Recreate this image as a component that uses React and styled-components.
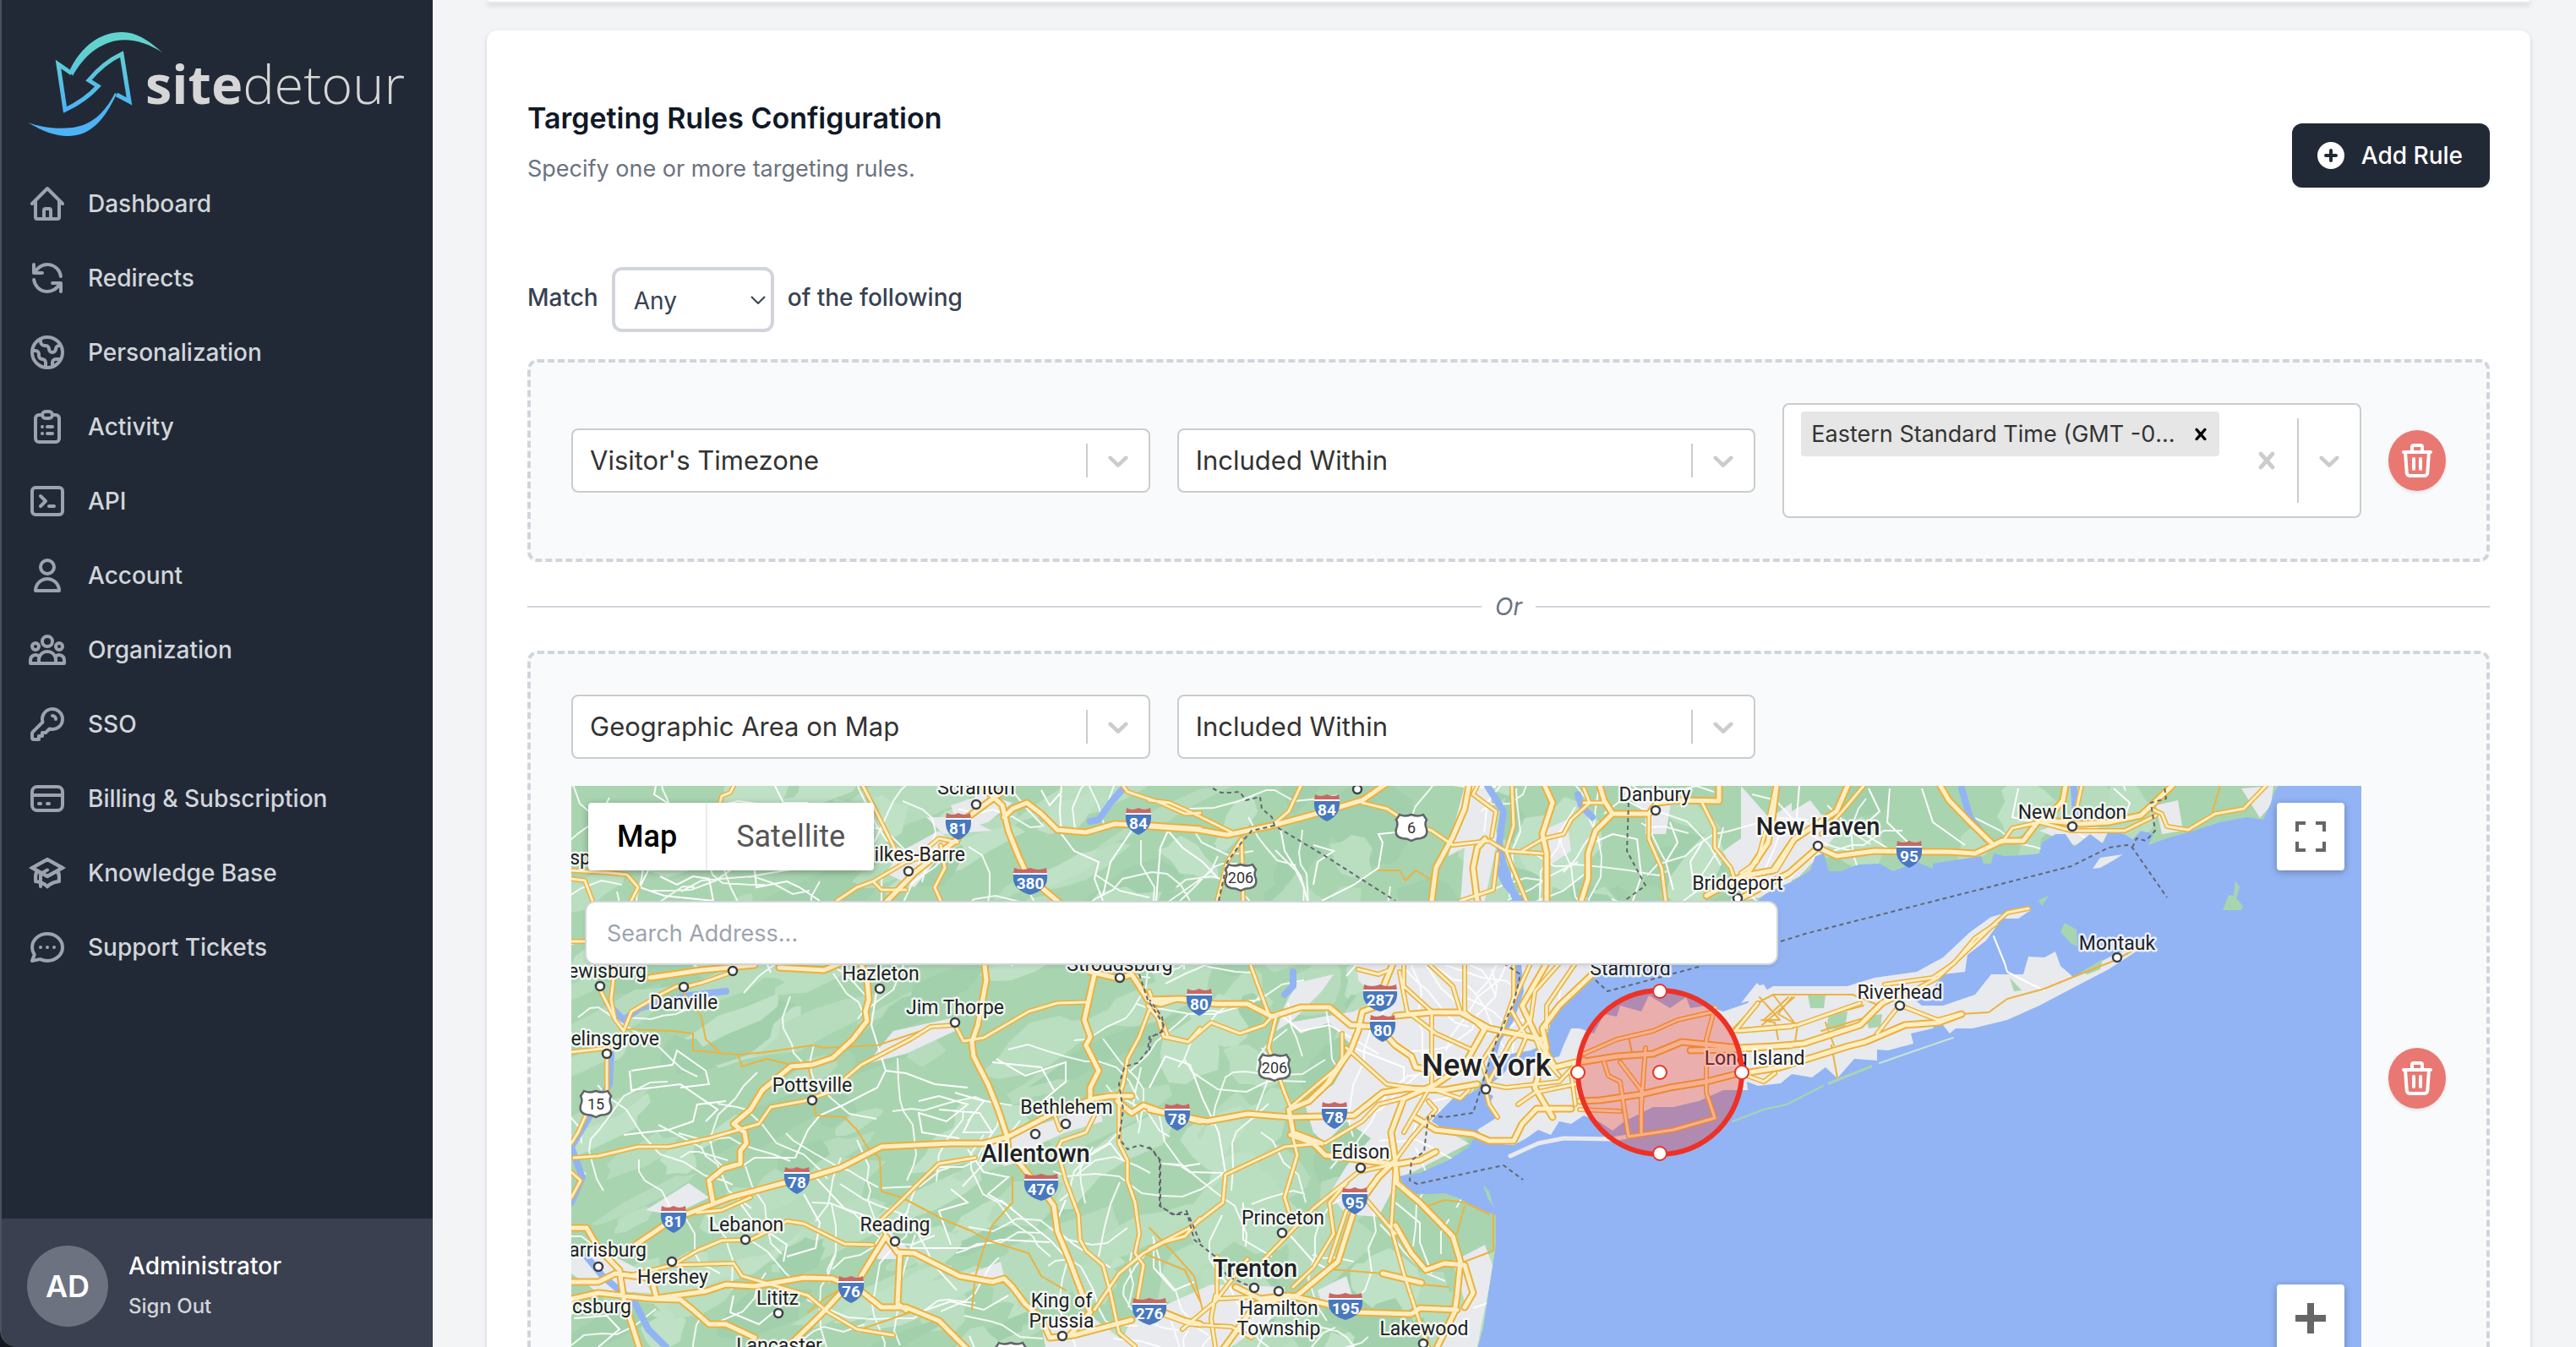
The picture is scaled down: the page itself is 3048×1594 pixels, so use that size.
import React from "react";
import styled, { createGlobalStyle } from "styled-components";
import {
  HiOutlineHome,
  HiOutlineRefresh,
  HiOutlineGlobe,
  HiOutlineClipboardList,
  HiOutlineTerminal,
  HiOutlineUser,
  HiOutlineUserGroup,
  HiOutlineKey,
  HiOutlineCreditCard,
  HiOutlineAcademicCap,
  HiOutlineChat,
  HiOutlineTrash,
  HiPlusCircle,
} from "react-icons/hi";

const GlobalStyle = createGlobalStyle`
  *, *::before, *::after { box-sizing: border-box; }
  body {
    margin: 0;
    font-family: Inter, "Liberation Sans", sans-serif;
    font-size: 28px;
    line-height: 40px;
    color: #374151;
    -webkit-font-smoothing: antialiased;
  }
  button, input, select { font: inherit; color: inherit; }
  h2, p { margin: 0; }
`;

/* ---------- shell ---------- */

const Shell = styled.div`
  display: flex;
  height: 100vh;
  overflow: hidden;
  background: #15181f;
`;

const Sidebar = styled.aside`
  display: flex;
  flex-direction: column;
  flex: 0 0 512px;
  overflow: hidden;
  background: #222936;
  border-left: 2px solid #4b515d;
  border-bottom-left-radius: 20px;
`;

const LogoLink = styled.a`
  display: block;
  height: 164px;
  padding: 32px 0 0 30px;
`;

const Nav = styled.nav`
  display: flex;
  flex: 1;
  flex-direction: column;
  gap: 8px;
  padding: 37px 14px 0;
`;

const NavLink = styled.a`
  display: flex;
  align-items: center;
  gap: 24px;
  height: 80px;
  padding: 0 16px;
  border-radius: 12px;
  color: #d1d5db;
  font-weight: 500;
  text-decoration: none;

  svg {
    width: 48px;
    height: 48px;
    color: #9ca3af;
  }
`;

const UserPanel = styled.a`
  display: flex;
  align-items: center;
  gap: 24px;
  height: 152px;
  padding: 8px 30px 0;
  background: #3a404f;
  color: #fff;
  font-weight: 500;
  text-decoration: none;
`;

const Avatar = styled.span`
  display: grid;
  place-items: center;
  width: 96px;
  height: 96px;
  border-radius: 50%;
  background: #6c7280;
  font-size: 36px;
  font-weight: 600;
`;

const UserText = styled.span`
  display: flex;
  flex-direction: column;
  gap: 8px;
`;

const SignOut = styled.span`
  font-size: 24px;
  color: #d1d5db;
`;

const Main = styled.main`
  flex: 1;
  min-width: 0;
  overflow-y: auto;
  scrollbar-width: none;
  padding: 0 54px 64px 64px;
  background: #f3f4f6;
`;

const Card = styled.section`
  padding: 80px 48px 48px;
  border-radius: 12px;
  background: #fff;
  box-shadow: 0 2px 6px rgba(0, 0, 0, 0.1), 0 2px 4px rgba(0, 0, 0, 0.06);
`;

const PreviousCard = styled.section`
  height: 4px;
  margin-bottom: 32px;
  border-radius: 0 0 12px 12px;
  background: #fff;
  box-shadow: 0 2px 6px rgba(0, 0, 0, 0.16), inset 0 -2px 0 #e5e7eb;
`;

/* ---------- header ---------- */

const Header = styled.header`
  display: flex;
  align-items: flex-end;
  justify-content: space-between;
  margin-bottom: 94px;
`;

const HeaderText = styled.div`
  padding-bottom: 2px;
`;

const Title = styled.h2`
  font-size: 34px;
  line-height: 48px;
  font-weight: 600;
  color: #111827;
`;

const Subtitle = styled.p`
  margin-top: 16px;
  font-size: 27px;
  color: #6b7280;
`;

const PrimaryButton = styled.button`
  display: flex;
  align-items: center;
  gap: 16px;
  height: 76px;
  padding: 0 32px 0 26px;
  border: 0;
  border-radius: 12px;
  background: #222936;
  color: #fff;
  font-weight: 500;
  box-shadow: 0 2px 4px rgba(0, 0, 0, 0.06);

  svg {
    width: 40px;
    height: 40px;
  }
`;

const MatchRow = styled.div`
  display: flex;
  align-items: center;
  gap: 16px;
  margin-bottom: 32px;
  font-weight: 500;
`;

const MatchText = styled.span`
  padding-bottom: 6px;
`;

const MatchSelectWrap = styled.span`
  display: grid;
  align-items: center;
  width: 192px;

  & > * { grid-area: 1 / 1; }
  svg {
    justify-self: end;
    margin-right: 10px;
    pointer-events: none;
  }
`;

const MatchSelect = styled.select`
  appearance: none;
  width: 100%;
  height: 77px;
  padding: 2px 22px 0;
  border: 4px solid #d1d5db;
  border-radius: 12px;
  background: #fff;
  font-weight: 400;
`;

/* ---------- rules ---------- */

const RuleBox = styled.div`
  display: flex;
  align-items: center;
  gap: 32px;
  padding: 48px;
  border: 4px dashed #d1d5db;
  border-radius: 12px;
  background: #f9fafb;
`;

const RuleBody = styled.div`
  display: flex;
  flex: 1;
  min-width: 0;
  flex-direction: column;
  gap: 32px;
`;

const FieldGrid = styled.div`
  display: grid;
  grid-template-columns: repeat(3, minmax(0, 1fr));
  gap: 32px;
  align-items: center;
`;

const FieldWrap = styled.span`
  display: grid;
  & > * { grid-area: 1 / 1; }
`;

const FieldSelect = styled.select`
  appearance: none;
  width: 100%;
  height: 76px;
  padding: 0 96px 0 20px;
  border: 2px solid #ccc;
  border-radius: 8px;
  background: #fff;
  color: #333;
  font-size: 31px;
`;

const Indicators = styled.span`
  display: flex;
  justify-self: end;
  align-items: center;
  padding: 2px;
  color: #ccc;
  pointer-events: none;
`;

const Divider = styled.span`
  align-self: stretch;
  width: 2px;
  margin: 16px 0;
  background: #ccc;
`;

const IndicatorIcon = styled.svg`
  display: block;
  width: 40px;
  height: 40px;
  margin: 16px;
  fill: currentColor;
`;

const MultiControl = styled.div`
  display: flex;
  height: 136px;
  border: 2px solid #ccc;
  border-radius: 8px;
  background: #fff;
`;

const MultiValues = styled.div`
  flex: 1;
  min-width: 0;
  padding: 4px 16px;
`;

const Chip = styled.span`
  display: flex;
  align-items: center;
  margin: 4px;
  height: 53px;
  border-radius: 4px;
  background: #e6e6e6;
  color: #333;
  font-size: 27px;
`;

const ChipLabel = styled.span`
  flex: 1;
  min-width: 0;
  overflow: hidden;
  padding-left: 12px;
  text-overflow: ellipsis;
  white-space: nowrap;
`;

const GhostButton = styled.button`
  display: grid;
  place-items: center;
  padding: 0;
  border: 0;
  background: none;
  color: inherit;
`;

const ChipRemove = styled(GhostButton)`
  width: 44px;
  height: 53px;
  margin-left: 8px;
  color: #000;

  svg { width: 28px; height: 28px; margin: 0; }
`;

const MultiInput = styled.input`
  display: block;
  width: 100%;
  height: 56px;
  padding: 0 4px;
  border: 0;
  outline: 0;
  background: none;
`;

const MultiIndicators = styled.div`
  display: flex;
  align-items: center;
  color: #ccc;
`;

const DeleteButton = styled.button`
  display: grid;
  place-items: center;
  flex: none;
  width: 68px;
  height: 72px;
  padding: 0;
  border: 0;
  border-radius: 50%;
  background: #e97873;
  color: #fff;
  box-shadow: 0 2px 4px rgba(0, 0, 0, 0.1);

  svg { width: 48px; height: 48px; }
`;

const OrRow = styled.div`
  display: flex;
  align-items: center;
  gap: 16px;
  height: 105px;
  color: #6b7280;
  font-style: italic;

  &::before, &::after {
    content: "";
    flex: 1;
    height: 2px;
    background: #d1d5db;
  }
`;

/* ---------- map ---------- */

const MapFrame = styled.div`
  position: relative;
  height: 800px;
  overflow: hidden;
  background: #92b4f4;
  font-family: Roboto, sans-serif;

  & > svg { display: block; width: 100%; height: 100%; }
`;

const MapTypes = styled.div`
  position: absolute;
  top: 20px;
  left: 20px;
  display: flex;
  border-radius: 4px;
  background: #fff;
  box-shadow: 0 2px 8px rgba(0, 0, 0, 0.3);
`;

const MapType = styled.button`
  height: 80px;
  padding: 0 34px;
  border: 0;
  border-left: ${(p) => (p.$active ? "0" : "2px solid #ececec")};
  background: none;
  color: ${(p) => (p.$active ? "#000" : "#565656")};
  font-size: 36px;
  font-weight: ${(p) => (p.$active ? 500 : 400)};
`;

const MapSearch = styled.input`
  position: absolute;
  top: 136px;
  left: 16px;
  width: 1412px;
  max-width: calc(100% - 34px);
  height: 76px;
  padding: 0 24px;
  border: 2px solid #d1d5db;
  border-radius: 12px;
  background: #fff;
  font-family: Inter, sans-serif;
  font-size: 27px;
  box-shadow: 0 2px 4px rgba(0, 0, 0, 0.08);

  &::placeholder { color: #9ca3af; opacity: 1; }
`;

const MapControl = styled.button`
  position: absolute;
  top: ${(p) => p.$top}px;
  right: 20px;
  display: grid;
  place-items: center;
  width: 80px;
  height: 80px;
  padding: 0;
  border: 0;
  border-radius: 4px;
  background: #fff;
  box-shadow: 0 2px 8px rgba(0, 0, 0, 0.3);
`;

/* Survey sheets: every sheet has an origin and a horizontal resolution. */
const sheet = (ox, oy, sx) => (pts) =>
  pts
    .trim()
    .split(/\s+/)
    .map((p) => {
      const [x, y] = p.split(",").map(Number);
      return `${Math.round(ox + x / sx)},${Math.round(oy + y / 3)}`;
    });
const S = {
  A: sheet(660, 720, 2.063),
  B: sheet(1360, 720, 2.063),
  C: sheet(2060, 720, 1.587),
  D: sheet(660, 1140, 2.063),
  E: sheet(1360, 1140, 2.063),
  F: sheet(2000, 1180, 1.496),
};
const join = (...parts) => parts.flat().join(" ");
const line = ([k, pts]) => "M" + S[k](pts).join(" L");
const lines = (list) => list.map(line).join(" ");

const MAINLAND = join(
  ["676,930"],
  S.C("1010,630 1000,660 995,690 980,750 950,740 900,760 850,790 800,815 765,840 775,800 750,790 735,820 720,800 690,790 680,835 655,800 625,845 610,800 590,800 565,830 560,870 530,875 495,880 475,870 470,905 455,905 450,880 400,895 360,905 360,925 330,900 285,932 260,905 220,910 185,932 165,932 155,870 140,880 130,930 100,965 60,1000 35,1025 0,1037"),
  S.B("1510,1005 1485,1037 1400,1110 1230,1200 1150,1230"),
  S.E("1085,30 1050,70 1020,110 985,180 975,230 960,290 930,310 880,320 850,330 830,400 800,450 770,470 740,480 700,540 690,560 720,590 800,600 780,650 730,700 660,745 610,755 620,790 650,820 690,820 720,815 750,830 800,870 845,895 845,1000 830,1150 815,1290 800,1370 800,1760"),
  ["676,1740"]
);

const LONG_ISLAND = join(
  S.E("890,345 960,345 1000,330 1010,290 1030,230 1050,230 1085,250 1110,180 1140,190 1150,150 1200,170 1220,115 1270,160 1310,120 1320,160 1360,150 1400,170 1460,140 1480,80 1500,75 1515,110 1568,90"),
  S.C("0,1400 30,1330 45,1360 60,1340 200,1340 250,1310 330,1290 380,1240 430,1150 470,1095 500,1080 540,1058 545,1070 520,1100 490,1100 460,1180 425,1230 420,1290 380,1300 360,1350 320,1380 340,1410 380,1410 440,1370 470,1300 530,1300 540,1235 570,1240 590,1218 600,1270 625,1310 660,1270 700,1230 760,1190 740,1220 690,1280 620,1350 560,1410 500,1460"),
  S.F("500,110 470,110 460,130 440,80 430,110 390,130 395,165 350,190 330,185 330,225 290,220 260,288 240,250 215,285 180,272 160,305 120,315 100,300"),
  S.E("1460,450 1400,450 1340,490 1280,510 1230,510 1160,560 1130,595 1100,565 1060,540 1030,570 1000,560 980,610 950,590 920,620 890,645 830,640 800,590 850,545 830,500 840,470 810,450 860,400")
);

const URBAN = [
  ["E", "505,0 1085,0 1050,80 985,200 960,330 850,330 780,470 700,540 720,590 780,640 640,745 610,755 560,900 480,890 440,820 480,720 540,620 480,560 430,640 400,600 380,500 450,430 500,300 440,210 370,250 340,210 500,170 560,130 510,60"],
  ["B", "770,630 830,630 850,820 820,1037 760,1037 770,850 730,880 740,790"],
  ["B", "960,790 1020,750 1030,860 980,910"],
  ["B", "1150,640 1280,640 1260,800 1210,800 1210,730"],
  ["B", "1400,860 1568,690 1568,985 1500,1000 1430,960"],
  ["C", "0,630 60,760 130,680 180,800 150,870 110,950 35,1025 0,1037"],
  ["C", "560,790 620,750 690,790 680,830 625,840"],
  ["C", "940,640 1000,630 995,700 975,745"],
  ["C", "780,700 820,680 830,790 790,800"],
  ["D", "1040,640 1200,560 1320,500 1330,560 1240,600 1180,640 1140,700 1090,720"],
  ["D", "770,1000 810,950 860,1020 830,1050 780,1050"],
  ["D", "820,240 960,195 970,240 850,320 760,355 780,310"],
  ["D", "215,875 320,780 370,830 280,895"],
  ["D", "33,1050 100,1010 190,1080 230,1170 90,1160 33,1100"],
  ["D", "990,1110 1080,1060 1090,1110 1010,1130"],
  ["D", "1180,1280 1290,1240 1400,1362 1190,1362"],
  ["D", "1400,1260 1568,1270 1568,1362 1370,1362"],
  ["A", "960,700 1040,660 1110,690 1050,760 980,790"],
  ["A", "840,860 930,790 960,830 870,990 800,940"],
  ["A", "900,740 990,740 1060,790 940,800"],
  ["E", "0,1240 150,1140 330,1150 330,1230 200,1362 0,1362"],
  ["E", "740,1060 820,1000 840,1080 810,1280 800,1362 700,1362 770,1200"],
  ["E", "410,1160 480,1110 500,1200 420,1210"],
  ["E", "360,70 330,150 310,240 350,200 420,100 450,40"],
];

const RIVERS = [
  ["D", "130,320 125,430 70,560 33,650 60,760 33,850"],
  ["D", "70,1040 110,1110 150,1160 190,1210 220,1300 265,1362"],
  ["D", "120,140 160,200 200,160 320,115 410,100"],
  ["B", "825,630 865,720 855,830 862,900 880,980 895,1037"],
  ["B", "850,920 870,980 905,1037"],
  ["B", "1045,660 1055,700 1080,740"],
  ["E", "900,0 905,100 880,200 850,270 825,400 800,500"],
  ["A", "1380,640 1350,690 1320,750 1300,755"],
  ["C", "415,640 430,740 460,820"],
  ["C", "625,640 628,740"],
  ["E", "350,30 350,80 330,110"],
];

const MOTORWAYS = [
  ["A", "1040,640 1085,700 1100,790 1125,880 1140,930 1180,990 1235,1060"],
  ["A", "1090,740 1110,710 1145,690 1180,730 1220,785 1290,795 1360,765 1450,772 1568,782"],
  ["A", "1085,650 1000,740 975,820 930,870 870,940 790,1060"],
  ["D", "225,50 350,25 480,5"],
  ["D", "540,15 650,25 700,-5"],
  ["D", "735,-20 755,60 760,130 750,170 755,205 720,270 670,335 620,360 570,365 500,450 470,520 430,570 455,600 460,640 445,665 445,710 405,730 370,770 380,855"],
  ["D", "1040,-20 1045,60 1025,220 1010,280 1015,330 1050,430 1075,520 1095,610 1100,660 1150,750 1190,820 1210,860 1220,950 1250,1060 1280,1170 1300,1240 1250,1320"],
  ["D", "190,1000 280,910 420,830 550,780 620,755 690,725 790,650 960,638 1040,640 1100,615 1210,530 1310,480 1350,470 1400,470"],
  ["D", "1365,490 1400,530 1430,505 1470,525 1568,560"],
  ["D", "33,1190 100,1170 230,1190 360,1165 410,1140 480,1145 600,1115 670,1120 740,1165 790,1220 850,1220 930,1270 1000,1370"],
  ["D", "230,1190 300,1195 330,1230 370,1280 410,1280 480,1330"],
  ["D", "33,940 70,940 100,1010 150,1090 160,1190 200,1370"],
  ["D", "33,1130 100,1130 140,1100 230,1120 240,1180"],
  ["D", "710,1140 640,1250 570,1350"],
  ["D", "1310,40 1285,200 1300,260 1290,290 1320,380 1300,440 1300,485"],
  ["D", "1300,30 1370,55 1400,40 1440,130 1470,145 1510,125 1568,135"],
  ["D", "800,970 830,1025 870,1030 980,1110 1060,1130 1090,1120 1110,1150 1140,1210 1180,1260 1200,1330"],
  ["D", "800,970 770,1040 740,1110"],
  ["D", "835,1030 830,1210 850,1230"],
  ["D", "1200,1330 1260,1320 1400,1265"],
  ["D", "1480,1240 1530,1270 1568,1280"],
  ["B", "0,775 120,785 190,805 300,770 370,745 450,710 520,680 580,620"],
  ["B", "780,630 770,710 740,810 700,920 690,1037"],
  ["B", "820,820 800,850 790,920 800,1037"],
  ["B", "965,630 985,690 960,800 970,870 970,1037"],
  ["B", "1100,630 1110,680 1130,730 1090,790 1070,870 1070,960 1055,1037"],
  ["B", "1130,730 1220,730 1240,690 1290,680 1390,685 1390,630"],
  ["B", "1530,630 1520,750 1510,830 1460,940 1360,1020"],
  ["C", "200,630 180,720 100,820 60,930 0,950"],
  ["C", "145,850 180,880 250,860 320,865 390,865 440,870 490,825 530,825 560,750 640,765 690,760 750,735 810,630"],
  ["C", "375,630 390,680 430,760 470,830"],
  ["C", "610,630 605,680 570,760"],
  ["C", "145,850 90,940 0,1030"],
  ["E", "0,130 80,125 160,145 240,145 300,190 370,155 440,155 490,220 560,225 600,290 640,330 650,370 700,380"],
  ["E", "600,-20 570,90 560,150 520,170 510,240 490,310 470,350 440,420 390,490 340,520 350,600 420,640"],
  ["E", "600,185 690,175 760,175 830,230 960,270"],
  ["E", "0,520 140,560 240,535 340,545 500,540 570,460 630,445 720,450 800,430"],
  ["E", "345,610 400,640 430,680 520,700 600,715 660,700 700,670"],
  ["E", "820,230 770,360 700,430 620,480 590,600 600,700 560,760 500,880 460,1060 360,1180 260,1210 180,1370"],
  ["E", "600,700 605,780 660,850 740,970 760,1060 750,1180 745,1240 700,1370"],
  ["E", "600,930 640,1030 675,1090 720,1065 770,1070 790,1170 770,1220"],
  ["E", "750,1230 660,1225 640,1245 510,1240 430,1210 340,1180 270,1190 210,1150"],
  ["E", "570,1102 665,1135"],
  ["E", "970,0 910,150 940,250 990,370 1040,350"],
  ["E", "1080,40 1000,150 960,230 970,300 940,440 985,545"],
  ["E", "650,550 700,590 790,605 830,630 890,630 910,570 945,515 1030,515"],
  ["E", "1050,350 1140,330 1230,320 1300,280 1440,300 1568,290"],
  ["E", "1050,490 1100,485 1200,465 1270,440 1360,420 1440,390"],
  ["F", "0,190 80,185 200,165 300,100 340,20 370,-10"],
  ["F", "95,270 160,250 280,175 310,160 380,100 440,90 480,60"],
];

const ARTERIALS = [
  ["A", "745,630 780,730 800,790 825,860 860,900 930,815 975,830"],
  ["A", "680,1037 730,990 770,970 850,900 900,880"],
  ["A", "770,970 790,1000 850,1000"],
  ["A", "935,840 945,920 920,990 935,1037"],
  ["A", "430,630 420,655 400,665 395,700"],
  ["A", "1380,630 1390,650 1470,690 1530,730 1568,725"],
  ["A", "33,930 130,940 170,945 195,990 180,1037"],
  ["A", "33,960 65,965 85,1037"],
  ["A", "33,1183 80,1183"],
  ["D", "140,0 130,130 140,200 160,240 180,170 250,110 290,80 310,85 350,70 430,30"],
  ["D", "100,80 130,170 140,200"],
  ["D", "33,315 125,300 120,340 120,450"],
  ["D", "80,500 50,600 33,640"],
  ["D", "33,740 55,770 33,830"],
  ["D", "40,690 100,685 195,650 270,650 370,620 490,570 520,510 600,490 660,460 740,360 860,270 910,225 970,220 990,275 1040,265 1150,170 1220,140 1290,138"],
  ["D", "1440,150 1480,220 1490,260 1540,280 1568,230"],
  ["D", "1450,140 1420,260 1390,340 1380,430 1370,470 1370,640 1390,700 1390,770 1410,850 1420,960 1410,1030 1430,1070 1415,1190"],
  ["D", "1310,540 1290,600 1230,630 1220,660 1240,770 1270,890 1275,980 1290,1020 1330,1070 1350,1170 1370,1310 1410,1360"],
  ["D", "770,1000 700,995 600,925 560,915 530,940 470,980 400,985 340,1020 280,1070"],
  ["D", "1020,690 930,710 880,780 840,840 790,910 800,970"],
  ["D", "170,1110 280,1070 430,1065 450,1110 520,1140 610,1180 660,1240 730,1300 820,1320"],
  ["D", "1568,905 1530,970 1480,990 1430,1030 1370,1100 1310,1230"],
  ["D", "1210,530 1225,590 1240,570"],
  ["D", "340,885 400,875 470,830"],
  ["B", "0,680 50,690 110,730 210,800"],
  ["B", "370,630 340,720 300,770"],
  ["B", "225,820 190,900 165,1037"],
  ["B", "225,820 228,1037"],
  ["B", "520,690 580,710 620,750 690,790 740,840 830,825 870,860 880,900 920,1037"],
  ["B", "885,630 890,770 870,860 960,870"],
  ["B", "800,630 790,660 845,720 835,810"],
  ["B", "1060,640 1075,690 1030,750 1010,800 960,820 910,860"],
  ["B", "1220,730 1220,820 1250,920 1260,1037"],
  ["B", "1350,690 1380,780 1380,850 1420,920 1430,970"],
  ["B", "1568,840 1530,930 1460,950"],
  ["B", "1060,690 1110,690"],
  ["B", "850,870 840,1000 760,1037"],
  ["C", "230,630 190,720 150,800"],
  ["C", "65,630 50,760 30,900 0,940"],
  ["C", "640,630 632,700"],
  ["C", "490,830 510,780 560,760 620,790 720,790 780,735"],
  ["C", "770,710 790,730 800,775 840,785 890,730 945,710 985,630"],
  ["C", "540,1065 500,1080 470,1130 420,1220 370,1310 300,1380"],
  ["C", "480,1120 440,1170 400,1260 360,1310 270,1335"],
  ["C", "300,1410 370,1460 410,1440"],
  ["E", "420,640 330,650 185,750 180,850 100,940 0,1015"],
  ["E", "350,620 360,680 330,830 340,880"],
  ["E", "310,190 290,300 330,460 345,510 460,370"],
  ["E", "245,0 290,180"],
  ["E", "0,100 35,260 95,280 150,210 220,250 280,220 300,190"],
  ["E", "530,840 600,960"],
  ["E", "600,720 590,940 620,1100 650,1230 680,1362"],
  ["E", "600,710 510,740 400,870 280,1050"],
  ["E", "480,780 440,850 450,960 400,1080 350,1150"],
  ["E", "540,800 480,880 440,1060"],
  ["E", "165,1040 165,1190 250,1185"],
  ["E", "160,1180 150,1260 160,1362"],
  ["E", "0,1230 100,1280 200,1290 250,1330"],
  ["E", "80,1300 160,1200 240,1050"],
  ["E", "510,20 560,40 590,20"],
  ["E", "620,0 620,80 690,170 690,430 620,600"],
  ["E", "680,0 740,80 760,170"],
  ["E", "770,0 770,170 820,240"],
  ["E", "610,30 630,170 700,250 790,310"],
  ["E", "890,0 890,120 860,240 810,350 830,430"],
  ["E", "930,0 880,160 920,260 900,330"],
  ["E", "1000,0 940,100 930,200 880,280 830,420"],
  ["E", "1040,0 970,150 970,230"],
  ["E", "830,430 870,440 1000,420 1040,360"],
  ["E", "820,440 830,500 850,545"],
  ["E", "900,500 940,460 1040,430"],
  ["E", "860,240 940,260 960,330 1000,400"],
  ["E", "470,250 470,340 420,450"],
  ["E", "480,300 580,430 640,440"],
  ["E", "680,490 700,520 640,620 600,700"],
  ["E", "700,450 760,480 780,450"],
  ["E", "430,640 520,560 560,500 640,470"],
  ["E", "1060,320 1140,270 1230,240 1290,200 1380,170"],
  ["E", "1110,350 1120,400 1150,420 1170,615 1280,590 1380,550"],
  ["E", "1150,350 1200,450 1200,600"],
  ["E", "1210,300 1200,510"],
  ["E", "1380,160 1360,270 1360,460 1380,550"],
  ["E", "1050,520 1150,525"],
  ["E", "1040,500 1030,390 1060,340"],
  ["E", "1440,240 1568,225"],
  ["F", "80,120 190,100 300,20"],
  ["F", "120,20 80,120"],
  ["F", "370,30 330,130"],
  ["F", "100,280 130,300 150,270"],
];

const LOCAL_ROADS = [
  ["D", "170,235 280,240 330,250 330,310 440,325 510,315 620,290 650,300 780,290 900,235"],
  ["D", "440,325 450,365 510,340 570,360"],
  ["D", "610,360 620,430 630,540 700,545 730,590 755,650 785,690 790,810 840,830 940,910 1010,950 1050,985 1150,1030 1180,1110 1240,1160"],
  ["D", "1110,760 1110,850 1060,930 1040,1010 1020,1110 1010,1230"],
  ["D", "300,90 350,190 360,270 400,320"],
  ["D", "610,1240 650,1190 700,1150"],
  ["D", "740,1300 860,1240"],
  ["D", "1430,1030 1530,1090 1568,1200"],
  ["B", "560,930 610,930 625,965 650,930 685,960"],
  ["C", "900,630 885,720"],
  ["C", "0,1490 100,1475 230,1410"],
  ["C", "30,1400 60,1370 210,1370 260,1410 240,1450 150,1500"],
  ["C", "60,1370 100,1470"],
  ["C", "100,1380 40,1480"],
  ["C", "410,1440 465,1435 500,1385 570,1350 620,1310 700,1250 750,1200"],
  ["E", "0,940 60,1030 110,1110 130,1230"],
  ["E", "440,1085 570,1102 660,1140 730,1150"],
  ["E", "680,860 720,840 770,850 830,890"],
  ["E", "840,890 840,1020 770,1060"],
  ["E", "770,860 750,960"],
  ["E", "1170,260 1180,330"],
  ["E", "1490,120 1540,200 1500,200 1560,120"],
  ["E", "1420,240 1480,150"],
  ["F", "180,0 155,60 190,100 185,160"],
  ["F", "125,80 150,90 155,150"],
  ["F", "250,170 260,285"],
  ["F", "240,90 255,170"],
];

const MINOR_ROADS = [
  ["A", "240,630 235,660 300,720 270,760 250,690"],
  ["A", "530,630 550,690 610,690"],
  ["A", "1180,645 1200,700 1230,650"],
  ["A", "1230,630 1225,720 1230,800 1260,860 1320,900 1310,960 1330,1037"],
  ["A", "1400,790 1350,900 1330,1020"],
  ["A", "1490,790 1470,850 1465,960 1460,1037"],
  ["A", "480,930 485,990 560,970 590,990 640,1037"],
  ["A", "250,950 290,980 330,950 370,960 380,1037"],
  ["A", "220,930 200,990 260,1020 380,1037"],
  ["B", "45,790 80,850 130,900 170,960"],
  ["B", "320,780 330,860 370,950 385,1037"],
  ["B", "400,980 410,900 450,860 400,840"],
  ["B", "420,1037 500,980 560,920 570,830 560,800 640,790"],
  ["B", "1085,830 1130,800 1190,820 1200,950 1180,1037"],
  ["B", "1270,760 1290,830 1260,900 1280,1000"],
  ["B", "1350,830 1320,900 1330,1000"],
  ["C", "110,630 105,740 140,780"],
  ["C", "240,640 260,720 220,790 300,880"],
  ["C", "280,640 275,760 330,860"],
  ["C", "340,640 360,760 420,840"],
  ["C", "520,640 510,740 550,760"],
  ["C", "700,640 730,690 720,740"],
  ["D", "180,380 280,360 290,310 360,380 370,430 300,440"],
  ["D", "175,380 180,450 300,430 390,520 360,560"],
  ["D", "160,610 270,590 330,560 340,500 410,490"],
  ["D", "780,80 765,220 800,380 850,390 920,430 1000,440"],
  ["D", "800,380 780,440 700,500 640,540"],
  ["D", "880,490 930,470 1000,500 950,560 880,530 890,600 980,620"],
  ["D", "930,520 1030,530 1060,600 990,600 1010,540"],
  ["D", "970,460 1040,490 1000,560"],
  ["D", "1070,340 1140,400 1240,350 1240,420 1190,480"],
  ["D", "1060,350 1180,370 1210,450"],
  ["D", "640,540 610,590 580,690 480,690 450,720"],
  ["D", "600,820 640,920 630,1010 560,1040"],
  ["D", "440,840 480,920 560,1000 550,1060"],
  ["D", "630,760 700,870 760,900 740,960"],
  ["D", "860,1010 1000,1010 1080,980 1200,990"],
  ["D", "960,800 1000,850 930,880 960,1000"],
  ["D", "1080,840 1150,920 1200,980 1250,1060"],
  ["D", "1240,840 1210,940 1260,1000 1350,1080"],
  ["D", "1000,660 1040,740 1100,760 1050,820 1110,870"],
  ["D", "1300,680 1350,640 1380,700"],
  ["D", "1480,710 1530,720 1568,710"],
  ["D", "40,1260 120,1250 150,1300 100,1362"],
  ["D", "430,1180 420,1240 490,1280 560,1200"],
  ["D", "880,1240 960,1200 1040,1230 1100,1180"],
  ["E", "0,440 40,330 100,360 130,480 170,600 185,745"],
  ["E", "30,710 70,715 100,740 185,745"],
  ["E", "10,990 10,1080 60,1160 110,1130"],
  ["E", "310,170 370,240 440,220 560,320"],
  ["E", "600,850 660,920 660,990 690,1100"],
  ["E", "230,850 230,980 300,1040"],
  ["E", "340,960 400,1060 440,1090"],
  ["E", "500,220 500,300 620,370 620,420"],
];

const BOUNDARIES = [
  ["B", "155,640 175,655 200,655 220,650 235,680 270,670 275,710 300,740 305,770 430,880 600,1037"],
  ["B", "305,770 250,790 225,830 190,900 170,1037"],
  ["B", "1170,690 1165,860 1210,985 1160,1037"],
  ["D", "1420,40 1440,130 1480,220 1470,250 1445,260 1440,310 1415,355 1385,365 1370,430 1380,520 1370,620 1390,660 1420,645 1450,660 1470,700 1470,860 1500,890 1540,890 1568,990"],
  ["E", "0,650 25,700 25,860 60,890 90,880 110,980 160,1040 190,1110 250,1150"],
  ["E", "0,310 5,260 35,240 30,190 0,130"],
  ["E", "865,0 905,40 890,140 850,260 820,400 790,530 720,545 680,540 670,670 640,700 635,770 655,783 865,717 912,768"],
  ["E", "1090,60 1118,100 1350,10"],
  ["C", "75,1183 120,1155 620,915 690,850 725,840 735,850 800,1025"],
  ["C", "735,850 742,815 760,825 778,790 770,690 798,675 795,630"],
];

const CITIES = [
  { t: "Scranton", x: 1155, y: 940 },
  { t: "Wilkes-Barre", x: 1142, y: 1019, a: "end" },
  { t: "sp", x: 699, y: 1023, a: "end" },
  { t: "Danbury", x: 1958, y: 948 },
  { t: "New Haven", x: 2151, y: 988, size: 29 },
  { t: "New London", x: 2452, y: 969 },
  { t: "Bridgeport", x: 2056, y: 1053 },
  { t: "Montauk", x: 2505, y: 1124 },
  { t: "Riverhead", x: 2248, y: 1182 },
  { t: "Stamford", x: 1929, y: 1154 },
  { t: "Lewisburg", x: 765, y: 1157, a: "end" },
  { t: "Hazleton", x: 1042, y: 1160 },
  { t: "Danville", x: 809, y: 1194 },
  { t: "Jim Thorpe", x: 1130, y: 1200 },
  { t: "Stroudsburg", x: 1325, y: 1149 },
  { t: "Selinsgrove", x: 780, y: 1237, a: "end" },
  { t: "Pottsville", x: 961, y: 1292 },
  { t: "Bethlehem", x: 1262, y: 1318 },
  { t: "Allentown", x: 1225, y: 1375, size: 29 },
  { t: "Lebanon", x: 883, y: 1457 },
  { t: "Reading", x: 1059, y: 1457 },
  { t: "Harrisburg", x: 765, y: 1487, a: "end" },
  { t: "Hershey", x: 796, y: 1519 },
  { t: "Lititz", x: 920, y: 1544 },
  { t: "Mechanicsburg", x: 747, y: 1554, a: "end" },
  { t: "Lancaster", x: 922, y: 1600 },
  { t: "King of", x: 1256, y: 1547 },
  { t: "Prussia", x: 1256, y: 1571 },
  { t: "New York", x: 1759, y: 1273, size: 36 },
  { t: "Long Island", x: 2076, y: 1260 },
  { t: "Edison", x: 1610, y: 1371 },
  { t: "Princeton", x: 1518, y: 1449 },
  { t: "Trenton", x: 1485, y: 1511, size: 29 },
  { t: "Hamilton", x: 1513, y: 1556 },
  { t: "Township", x: 1513, y: 1580 },
  { t: "Lakewood", x: 1685, y: 1580 },
];

const DOTS = [
  ["A", "1021,696 856,933"],
  ["D", "427,27 307,84 103,81 786,90 1372,50 970,210 120,320 621,486 1240,570 1165,605 458,980 823,987 100,1077 278,1058 539,1241 1232,1322"],
  ["E", "821,447 516,726 324,957 256,1152 316,1163 668,1350"],
  ["B", "508,642 1236,717 1436,1030"],
  ["C", "144,843 622,774 706,1238 298,1409"],
].flatMap(([k, p]) => S[k](p).map((q) => q.split(",").map(Number)));

const INTERSTATES = [
  [81, 1134, 978], [84, 1347, 972], [380, 1219, 1043], [84, 1570, 956], [95, 2259, 1011],
  [78, 943, 1397], [81, 797, 1443], [476, 1232, 1405], [76, 1007, 1526], [78, 1393, 1322],
  [276, 1360, 1552], [80, 1419, 1186], [287, 1633, 1181], [80, 1636, 1217], [78, 1579, 1320],
  [95, 1603, 1421], [195, 1592, 1546],
];
const US_ROUTES = [[6, 1670, 979], [206, 1468, 1038], [15, 705, 1306], [206, 1508, 1263], [202, 1196, 1604]];

/* Seeded generator, so terrain and side roads come out the same on each load. */
function makeRandom(seed) {
  let s = seed;
  return () => {
    s = (s * 1664525 + 1013904223) % 4294967296;
    return s / 4294967296;
  };
}

function terrain() {
  const r = makeRandom(41);
  const tones = ["#b9dec0", "#bfe1c6", "#a2d0ac", "#b6dcbd"];
  return Array.from({ length: 340 }, () => {
    const cx = 676 + r() * 1960;
    const cy = 930 + r() * 670;
    const ridge = cx < 1400;
    const rx = ridge ? 24 + r() * 70 : 16 + r() * 38;
    const ry = ridge ? 8 + r() * 22 : 16 + r() * 40;
    const tilt = ridge ? -0.45 : -1;
    const n = 12;
    const pts = Array.from({ length: n }, (_, i) => {
      const a = (i / n) * Math.PI * 2;
      const k = 0.7 + r() * 0.45;
      const x = Math.cos(a) * rx * k;
      const y = Math.sin(a) * ry * k;
      return `${Math.round(cx + x * Math.cos(tilt) - y * Math.sin(tilt))},${Math.round(cy + x * Math.sin(tilt) + y * Math.cos(tilt))}`;
    });
    return { pts: pts.join(" "), fill: tones[Math.floor(r() * tones.length)] };
  });
}

function sideRoads() {
  const r = makeRandom(7);
  return Array.from({ length: 300 }, () => {
    let x = 676 + r() * 2000;
    let y = 930 + r() * 670;
    let a = r() * Math.PI * 2;
    let d = `M${Math.round(x)},${Math.round(y)}`;
    const steps = 3 + Math.floor(r() * 6);
    for (let i = 0; i < steps; i += 1) {
      a += (r() - 0.5) * 1.3;
      const len = 10 + r() * 26;
      x += Math.cos(a) * len;
      y += Math.sin(a) * len;
      d += ` L${Math.round(x)},${Math.round(y)}`;
    }
    return d;
  }).join(" ");
}

const TERRAIN = terrain();
const SIDE_ROADS = sideRoads();

function Interstate({ n, x, y }) {
  const w = n > 99 ? 20 : 15;
  return (
    <g transform={`translate(${x} ${y})`}>
      <path
        d={`M${-w},-8 L${w},-8 C${w + 1},4 ${w - 4},11 0,16 C${4 - w},11 ${-w - 1},4 ${-w},-8Z`}
        fill="#4778c0"
      />
      <path d={`M${1 - w},-16 Q${-w / 2},-12 0,-16 Q${w / 2},-12 ${w - 1},-16 L${w},-9 H${-w}Z`} fill="#c96764" />
      <path d={`M${-w},-9 H${w}`} stroke="#fff" strokeWidth="2" />
      <text y="9" fontSize="19" fontWeight="700" fill="#fff" textAnchor="middle">{n}</text>
    </g>
  );
}

function UsRoute({ n, x, y }) {
  return (
    <g transform={`translate(${x} ${y})`}>
      <path
        d="M-14,-15 Q-8,-12 0,-15 Q8,-12 14,-15 L18,-9 Q15,-4 18,2 Q20,11 11,13 Q5,13 0,16 Q-5,13 -11,13 Q-20,11 -18,2 Q-15,-4 -18,-9Z"
        fill="#fff"
        stroke="#5f6368"
        strokeWidth="2.5"
      />
      <text y="7" fontSize="18" fill="#303134" textAnchor="middle">{n}</text>
    </g>
  );
}

function MapCanvas() {
  return (
    <svg viewBox="676 930 2118 800" preserveAspectRatio="xMinYMin slice" role="img" aria-label="Map of the New York area">
      <defs>
        <clipPath id="mainland"><polygon points={MAINLAND} /></clipPath>
      </defs>
      <rect x="676" y="930" width="2118" height="800" fill="#92b4f4" />
      <polygon points={MAINLAND} fill="#a9d4b0" />
      <g clipPath="url(#mainland)">
        {TERRAIN.map((t, i) => <polygon key={i} points={t.pts} fill={t.fill} />)}
        {URBAN.map(([k, p], i) => <polygon key={i} points={S[k](p).join(" ")} fill="#e8eaed" />)}
        <path d={SIDE_ROADS} fill="none" stroke="#fff" strokeOpacity="0.85" strokeWidth="2" />
        <path d={lines(MINOR_ROADS)} fill="none" stroke="#fff" strokeWidth="2" />
      </g>
      <polygon points={LONG_ISLAND} fill="#e8eaed" />
      <g fill="#a9d4b0">
        <polygon points={S.C("905,1070 915,1018 925,1020 928,965 937,990 930,1030 943,1055 940,1070").join(" ")} />
        <polygon points={S.C("600,1150 608,1115 630,1140 632,1200 620,1190").join(" ")} />
        <polygon points={S.C("558,1035 578,1020 565,1055").join(" ")} />
        <polygon points={S.C("125,1370 158,1370 155,1420 130,1420").join(" ")} />
        <polygon points={S.C("165,1440 200,1430 195,1490 160,1495").join(" ")} />
        <polygon points={S.C("235,1450 265,1440 262,1485 240,1490").join(" ")} />
        <polygon points={S.C("505,1310 527,1355 512,1360").join(" ")} />
        <polygon points={S.C("640,1290 680,1245 675,1280 650,1300").join(" ")} />
        <polygon points={S.E("815,785 830,810 840,865 825,830").join(" ")} />
        <polygon points={S.E("700,860 780,870 800,930 740,920").join(" ")} />
      </g>
      <polygon points={S.C("660,925 675,885 717,872 700,895 675,920").join(" ")} fill="#e8eaed" />
      <g fill="none" strokeLinejoin="round" strokeLinecap="round">
        <path d={lines(RIVERS)} stroke="#92b4f4" strokeWidth="8" />
        <path d={line(["E", "880,685 950,640 1010,622 1130,625 1180,612"])} stroke="#e8eaed" strokeWidth="5" />
        <path d={line(["F", "75,440 130,400 170,380 235,315"])} stroke="#a9d4b0" strokeWidth="2" />
        <path d={line(["F", "245,305 320,245"])} stroke="#a9d4b0" strokeWidth="3" />
        <path d={line(["F", "335,235 400,190 465,145"])} stroke="#c9e3d0" strokeWidth="2" />
        <path d={line(["C", "475,1165 495,1260 500,1290 540,1330 570,1355"])} stroke="#fff" strokeWidth="2" />
        <path d={lines(LOCAL_ROADS)} stroke="#ecb23f" strokeWidth="2" />
        <path d={lines(ARTERIALS)} stroke="#ecb03c" strokeWidth="6" />
        <path d={lines(MOTORWAYS)} stroke="#ecb03c" strokeWidth="9" />
        <path d={lines(ARTERIALS)} stroke="#fdeec2" strokeWidth="3" />
        <path d={lines(MOTORWAYS)} stroke="#fdeec2" strokeWidth="5" />
        <path d={lines(BOUNDARIES)} stroke="#63676e" strokeWidth="2" strokeDasharray="5 4" strokeLinecap="butt" />
      </g>
      {INTERSTATES.map(([n, x, y]) => <Interstate key={`${x}-${y}`} n={n} x={x} y={y} />)}
      {US_ROUTES.map(([n, x, y]) => <UsRoute key={`${x}-${y}`} n={n} x={x} y={y} />)}
      <g fill="#fff" stroke="#3c4043" strokeWidth="2.5">
        {DOTS.map(([x, y]) => <circle key={`${x}-${y}`} cx={x} cy={y} r="5" />)}
      </g>
      <g fill="#202124" stroke="#fff" strokeOpacity="0.8" strokeWidth="5" strokeLinejoin="round" paintOrder="stroke">
        {CITIES.map((c) => (
          <text
            key={c.t}
            x={c.x}
            y={c.y}
            textAnchor={c.a || "middle"}
            fontSize={c.size || 23}
            fontWeight={c.size ? 500 : 400}
          >
            {c.t}
          </text>
        ))}
      </g>
      <circle cx="1964" cy="1269" r="97" fill="#ee3124" fillOpacity="0.32" stroke="#ee3124" strokeWidth="6" />
      <g fill="#fff" stroke="#ee3124" strokeWidth="2">
        {[[1964, 1269], [1964, 1173], [1964, 1365], [1867, 1269], [2061, 1269]].map(([x, y]) => (
          <circle key={`${x}-${y}`} cx={x} cy={y} r="8" />
        ))}
      </g>
    </svg>
  );
}

/* ---------- small parts ---------- */

const CHEVRON =
  "M4.516 7.548c0.436-0.446 1.043-0.481 1.576 0l3.908 3.747 3.908-3.747c0.533-0.481 1.141-0.446 1.574 0 0.436 0.445 0.408 1.197 0 1.615-0.406 0.418-4.695 4.502-4.695 4.502-0.217 0.223-0.502 0.335-0.787 0.335s-0.57-0.112-0.789-0.335c0 0-4.287-4.084-4.695-4.502s-0.436-1.17 0-1.615z";
const CROSS =
  "M14.348 14.849c-0.469 0.469-1.229 0.469-1.697 0l-2.651-3.030-2.651 3.029c-0.469 0.469-1.229 0.469-1.697 0-0.469-0.469-0.469-1.229 0-1.697l2.758-3.15-2.759-3.152c-0.469-0.469-0.469-1.228 0-1.697s1.228-0.469 1.697 0l2.652 3.031 2.651-3.031c0.469-0.469 1.228-0.469 1.697 0s0.469 1.229 0 1.697l-2.758 3.152 2.758 3.15c0.469 0.469 0.469 1.229 0 1.698z";

const Glyph = ({ d }) => (
  <IndicatorIcon viewBox="0 0 20 20" aria-hidden="true"><path d={d} /></IndicatorIcon>
);

function Field({ label, options }) {
  return (
    <FieldWrap>
      <FieldSelect aria-label={label} defaultValue={options[0]}>
        {options.map((o) => <option key={o}>{o}</option>)}
      </FieldSelect>
      <Indicators>
        <Divider />
        <Glyph d={CHEVRON} />
      </Indicators>
    </FieldWrap>
  );
}

function Logo() {
  return (
    <svg width="452" height="132" viewBox="32 32 452 132" role="img" aria-label="sitedetour">
      <defs>
        <linearGradient id="mark" gradientUnits="userSpaceOnUse" x1="110" y1="38" x2="110" y2="161">
          <stop offset="0.15" stopColor="#62d2cc" />
          <stop offset="0.75" stopColor="#4db2f7" />
        </linearGradient>
      </defs>
      <g fill="url(#mark)">
        <path d="M192,62 C174,46 160,38 145,38 C117,38 96,56 83,82 L86,90 C99,66 117,52 138,48 C156,45 175,51 192,62Z" />
        <path d="M33,145 C52,156 66,161 80,161 C108,161 124,141 138,111 L136,110 C124,134 108,148 86,151 C66,153 50,151 33,145Z" />
      </g>
      <path
        d="M85,87 L69,76 L77,130 C94,122 107,112 116,102 L105,95 C116,82 129,71 144,64 L153,120 L138,112"
        fill="none"
        stroke="url(#mark)"
        strokeWidth="5"
      />
      <text y="123" fill="#d6d6d6" fontFamily='"Open Sans", sans-serif' fontSize="63">
        <tspan x="172" fontWeight="700">site</tspan>
        <tspan fontWeight="300">detour</tspan>
      </text>
    </svg>
  );
}

const NAV = [
  ["Dashboard", HiOutlineHome],
  ["Redirects", HiOutlineRefresh],
  ["Personalization", HiOutlineGlobe],
  ["Activity", HiOutlineClipboardList],
  ["API", HiOutlineTerminal],
  ["Account", HiOutlineUser],
  ["Organization", HiOutlineUserGroup],
  ["SSO", HiOutlineKey],
  ["Billing & Subscription", HiOutlineCreditCard],
  ["Knowledge Base", HiOutlineAcademicCap],
  ["Support Tickets", HiOutlineChat],
];

export default function App() {
  return (
    <>
      <GlobalStyle />
      <Shell>
        <Sidebar>
          <LogoLink href="#home"><Logo /></LogoLink>
          <Nav>
            {NAV.map(([label, Icon]) => (
              <NavLink key={label} href={`#${label}`}>
                <Icon />
                {label}
              </NavLink>
            ))}
          </Nav>
          <UserPanel href="#sign-out">
            <Avatar>AD</Avatar>
            <UserText>
              Administrator
              <SignOut>Sign Out</SignOut>
            </UserText>
          </UserPanel>
        </Sidebar>

        <Main>
          <PreviousCard />
          <Card>
            <Header>
              <HeaderText>
                <Title>Targeting Rules Configuration</Title>
                <Subtitle>Specify one or more targeting rules.</Subtitle>
              </HeaderText>
              <PrimaryButton type="button">
                <HiPlusCircle />
                Add Rule
              </PrimaryButton>
            </Header>

            <MatchRow>
              <MatchText as="label" htmlFor="match">Match</MatchText>
              <MatchSelectWrap>
                <MatchSelect id="match" defaultValue="Any">
                  <option>Any</option>
                  <option>All</option>
                </MatchSelect>
                <svg width="18" height="10" viewBox="0 0 18 10" fill="none" stroke="#374151" strokeWidth="2" aria-hidden="true">
                  <path d="M1 1l8 8 8-8" />
                </svg>
              </MatchSelectWrap>
              <MatchText>of the following</MatchText>
            </MatchRow>

            <RuleBox>
              <RuleBody>
                <FieldGrid>
                  <Field label="Rule type" options={["Visitor's Timezone", "Geographic Area on Map"]} />
                  <Field label="Condition" options={["Included Within", "Not Included Within"]} />
                  <MultiControl>
                    <MultiValues>
                      <Chip>
                        <ChipLabel>Eastern Standard Time (GMT -05:00)</ChipLabel>
                        <ChipRemove type="button" aria-label="Remove Eastern Standard Time"><Glyph d={CROSS} /></ChipRemove>
                      </Chip>
                      <MultiInput aria-label="Timezones" />
                    </MultiValues>
                    <MultiIndicators>
                      <GhostButton type="button" aria-label="Clear"><Glyph d={CROSS} /></GhostButton>
                      <Divider />
                      <GhostButton type="button" aria-label="Open"><Glyph d={CHEVRON} /></GhostButton>
                    </MultiIndicators>
                  </MultiControl>
                </FieldGrid>
              </RuleBody>
              <DeleteButton type="button" aria-label="Delete rule"><HiOutlineTrash /></DeleteButton>
            </RuleBox>

            <OrRow>Or</OrRow>

            <RuleBox>
              <RuleBody>
                <FieldGrid>
                  <Field label="Rule type" options={["Geographic Area on Map", "Visitor's Timezone"]} />
                  <Field label="Condition" options={["Included Within", "Not Included Within"]} />
                </FieldGrid>
                <MapFrame>
                  <MapCanvas />
                  <MapTypes>
                    <MapType type="button" $active>Map</MapType>
                    <MapType type="button">Satellite</MapType>
                  </MapTypes>
                  <MapSearch type="text" aria-label="Search address" placeholder="Search Address..." />
                  <MapControl type="button" $top={20} aria-label="Full screen">
                    <svg width="36" height="36" viewBox="0 0 18 18" fill="#666">
                      <path d="M0 0v6h2V2h4V0H0zm16 0h-4v2h4v4h2V0h-2zm0 16h-4v2h6v-6h-2v4zM2 12H0v6h6v-2H2v-4z" />
                    </svg>
                  </MapControl>
                  <MapControl type="button" $top={590} aria-label="Zoom in">
                    <svg width="36" height="36" viewBox="0 0 18 18" fill="#666">
                      <path d="M18 7h-7V0H7v7H0v4h7v7h4v-7h7z" />
                    </svg>
                  </MapControl>
                </MapFrame>
              </RuleBody>
              <DeleteButton type="button" aria-label="Delete rule"><HiOutlineTrash /></DeleteButton>
            </RuleBox>
          </Card>
        </Main>
      </Shell>
    </>
  );
}
